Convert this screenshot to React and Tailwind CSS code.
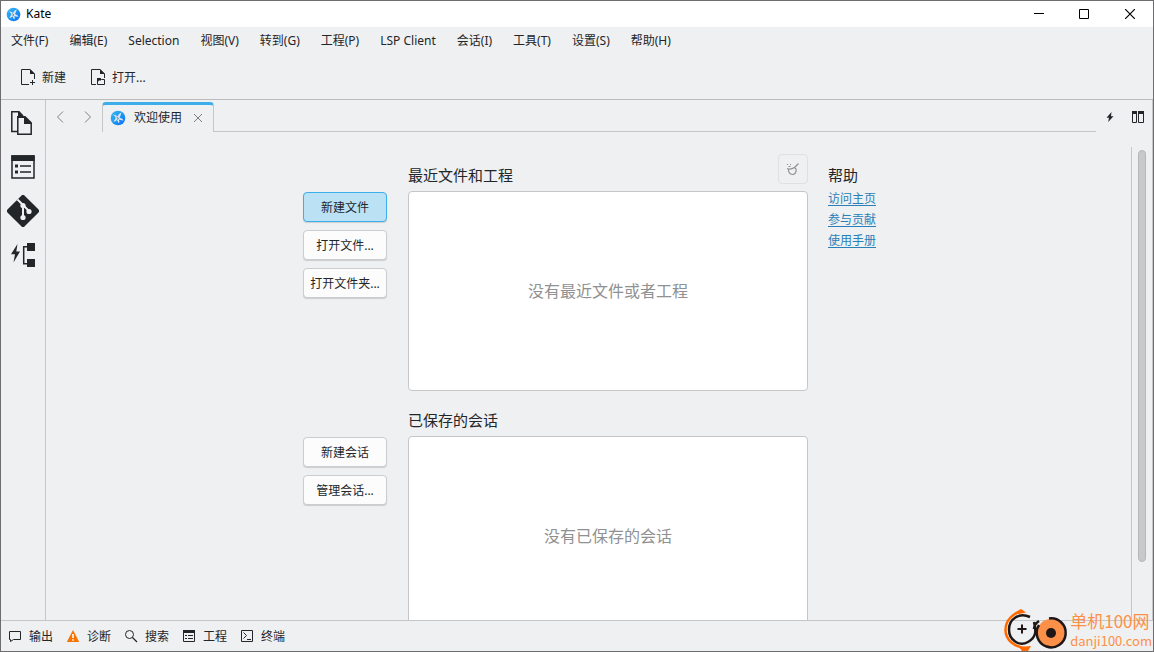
import { useState } from "react";

const MENUS = [
  "文件(F)",
  "编辑(E)",
  "Selection",
  "视图(V)",
  "转到(G)",
  "工程(P)",
  "LSP Client",
  "会话(I)",
  "工具(T)",
  "设置(S)",
  "帮助(H)",
];

const LINKS = ["访问主页", "参与贡献", "使用手册"];

function KateIcon({ size }) {
  return (
    <svg width={size} height={size} viewBox="0 0 16 16">
      <defs>
        <linearGradient id="kate" x1="0" y1="0" x2="1" y2="1">
          <stop offset="0" stopColor="#3fb8f0" />
          <stop offset="0.5" stopColor="#1d99f3" />
          <stop offset="1" stopColor="#0a6cff" />
        </linearGradient>
      </defs>
      <circle cx="8" cy="8" r="7.300" fill="url(#kate)" />
      <path
        d="M3 4.500 6 5.200 7.500 6.500 9 4 11.500 2.500 10.500 5.500 9.500 7.500 12.500 9 13.500 10.500 10.500 10 8.800 9.500 9.500 12 8.500 13 7 10 5 11.500 3.500 11.500 5.500 8.500 5.500 7z"
        fill="#dbe6ee"
      />
      <path d="M6.500 7 8.500 8.500 6.800 9.500" fill="none" stroke="#5d83a3" />
    </svg>
  );
}

function NewIcon() {
  return (
    <svg width="16" height="18" viewBox="0 0 16 18" fill="none" stroke="#232629">
      <path d="M9 16.500H1.500V1.500H10L14.500 6V11" />
      <path d="M10 1v5h5z" fill="#232629" stroke="none" />
      <path d="M12.500 12v5M10 14.500h5" />
    </svg>
  );
}

function OpenIcon() {
  return (
    <svg width="16" height="18" viewBox="0 0 16 18" fill="none" stroke="#232629">
      <path d="M6 16.500H1.500V1.500H10L14.500 6V10" />
      <path d="M10 1v5h5z" fill="#232629" stroke="none" />
      <path d="M7.500 16.500v-6h3l1 1h3v5z" />
      <path d="M7 10h4v2.500H9L7 15z" fill="#232629" stroke="none" />
    </svg>
  );
}

function DocumentsIcon() {
  return (
    <svg width="32" height="32" viewBox="0 0 32 32" fill="none" stroke="#232629" strokeWidth="1.500">
      <path d="M11 24.500H4.800V4.800H12L16 9" />
      <path d="M11 4l7 7h-7z" fill="#232629" stroke="none" />
      <path d="M10.800 9.800H18l6.200 6V27.200H10.800z" />
      <path d="M17 9l8 8h-8z" fill="#232629" stroke="none" />
    </svg>
  );
}

function ProjectListIcon() {
  return (
    <svg width="32" height="32" viewBox="0 0 32 32">
      <path d="M5 5h22v22H5z" fill="none" stroke="#232629" strokeWidth="1.500" />
      <path
        d="M4.300 4.300h23.400v5.700H4.300zM8 13.500h3v3H8zM8 19.500h3v3H8zM13 14.300h11v1.400H13zM13 20.300h11v1.400H13z"
        fill="#232629"
      />
    </svg>
  );
}

function GitIcon() {
  return (
    <svg width="32" height="32" viewBox="0 0 32 32">
      <path
        d="M14.300.700a2.400 2.400 0 0 1 3.400 0L31.300 14.300a2.400 2.400 0 0 1 0 3.400L17.700 31.300a2.400 2.400 0 0 1-3.400 0L.700 17.700a2.400 2.400 0 0 1 0-3.400z"
        fill="#232629"
      />
      <path d="M10.500 4.500 16 10v12M16 10l6 6" fill="none" stroke="#eff0f1" strokeWidth="2" />
      <circle cx="16" cy="10.500" r="2.600" fill="#eff0f1" />
      <circle cx="16" cy="22.500" r="2.600" fill="#eff0f1" />
      <circle cx="22" cy="16.500" r="2.600" fill="#eff0f1" />
    </svg>
  );
}

function LspIcon() {
  return (
    <svg width="32" height="32" viewBox="0 0 32 32" fill="#232629">
      <path d="M10.500 5 4 15.200H8L6.500 23.500 13 12.500H9.300z" />
      <path d="M20 4h8v8h-8zM20 20h8v8h-8z" />
      <path d="M22 7.700h-5.300v17H22" fill="none" stroke="#232629" strokeWidth="1.500" />
    </svg>
  );
}

function OutputIcon() {
  return (
    <svg width="16" height="16" viewBox="0 0 16 16" fill="none" stroke="#232629">
      <path d="M2.500 3.500h11v8h-7l-3 2v-2h-1z" />
    </svg>
  );
}

function WarningIcon() {
  return (
    <svg width="16" height="16" viewBox="0 0 16 16">
      <path d="M8 2 14.200 14H1.800z" fill="#f67400" />
      <path d="M7.200 6h1.600v4H7.200zM7.200 11.200h1.600v1.600H7.200z" fill="#fff" />
    </svg>
  );
}

function SearchIcon() {
  return (
    <svg width="16" height="16" viewBox="0 0 16 16" fill="none" stroke="#232629">
      <circle cx="6.500" cy="6.500" r="4" />
      <path d="M9.500 9.500 14 14" strokeWidth="1.200" />
    </svg>
  );
}

function ProjectIcon() {
  return (
    <svg width="16" height="16" viewBox="0 0 16 16" fill="none" stroke="#232629">
      <path d="M2.500 2.500h11v11h-11z" />
      <path d="M2 2h12v3H2z" fill="#232629" stroke="none" />
      <path d="M4 7.500h2M7 7.500h5M4 10.500h2M7 10.500h5" />
    </svg>
  );
}

function TerminalIcon() {
  return (
    <svg width="16" height="16" viewBox="0 0 16 16" fill="none" stroke="#232629">
      <path d="M2.500 2.500h11v11h-11zM4.500 4.500l3 3-3 3M8 11.500h4" />
    </svg>
  );
}

const SIDE_TOOLS = [
  { label: "文档", Icon: DocumentsIcon },
  { label: "工程列表", Icon: ProjectListIcon },
  { label: "Git", Icon: GitIcon },
  { label: "LSP", Icon: LspIcon },
];

const STATUS_TOOLS = [
  { label: "输出", Icon: OutputIcon },
  { label: "诊断", Icon: WarningIcon },
  { label: "搜索", Icon: SearchIcon },
  { label: "工程", Icon: ProjectIcon },
  { label: "终端", Icon: TerminalIcon },
];

function TitleBar() {
  return (
    <header className="flex h-[26px] shrink-0 items-center bg-white pl-[5px] text-black">
      <KateIcon size={15} />
      <span className="ml-[5px] flex-1">Kate</span>
      <button aria-label="最小化" className="flex h-full w-[46px] items-center justify-center">
        <svg width="11" height="10" viewBox="0 0 11 10" stroke="currentColor">
          <path d="M1 4.500h10" />
        </svg>
      </button>
      <button aria-label="最大化" className="flex h-full w-[46px] items-center justify-center">
        <svg width="10" height="10" viewBox="0 0 10 10" fill="none" stroke="currentColor">
          <path d="M.5.5h9v9h-9z" />
        </svg>
      </button>
      <button aria-label="关闭" className="flex h-full w-[46px] items-center justify-center">
        <svg width="10" height="10" viewBox="0 0 10 10" stroke="currentColor">
          <path d="M0 0l10 10M10 0 0 10" strokeWidth="1.200" />
        </svg>
      </button>
    </header>
  );
}

function TabBar() {
  return (
    <div className="flex h-8 shrink-0">
      <div className="flex w-14 shrink-0 text-[#7d8082]">
        <button aria-label="上一个" className="flex w-7 items-center justify-center pt-px">
          <svg width="8" height="12" viewBox="0 0 8 12" fill="none" stroke="currentColor">
            <path d="M7 .5 1.500 6 7 11.500" />
          </svg>
        </button>
        <button aria-label="下一个" className="flex w-7 items-center justify-center pt-px">
          <svg width="8" height="12" viewBox="0 0 8 12" fill="none" stroke="currentColor">
            <path d="M1 .5 6.500 6 1 11.500" />
          </svg>
        </button>
      </div>
      <div className="mt-[2px] flex w-28 shrink-0 items-center rounded-t-[4px] border-x border-t-[3px] border-x-[#c4c6c8] border-t-[#3daee9] pb-[2px] pl-[7px]">
        <KateIcon size={16} />
        <span className="ml-2">欢迎使用</span>
        <button aria-label="关闭标签" className="ml-[11px] text-[#7d8082]">
          <svg width="10" height="10" viewBox="0 0 10 10" stroke="currentColor">
            <path d="M1 1l8 8M9 1 1 9" />
          </svg>
        </button>
      </div>
      <div className="flex-1 border-b border-[#c4c6c8]" />
      <button aria-label="快速打开" className="flex w-7 items-center justify-center pt-px">
        <svg width="8" height="10" viewBox="0 0 8 10" fill="#232629">
          <path d="M5.500 0 .5 5.700H3L2.200 10 7.500 4.300H5z" />
        </svg>
      </button>
      <button aria-label="拆分视图" className="flex w-7 items-center justify-center pt-px">
        <svg width="12" height="12" viewBox="0 0 12 12" fill="none" stroke="#232629">
          <path d="M.5.5h4v11h-4zM6.500.5h5v11h-5z" />
          <path d="M0 0h5v3H0zM6 0h6v3H6z" fill="#232629" stroke="none" />
        </svg>
      </button>
    </div>
  );
}

function ActionButton({ active, onClick, children }) {
  return (
    <button
      onClick={onClick}
      className={`h-[30px] w-[84px] rounded-[4px] border pt-[2px] text-center shadow-[0_1px_1px_rgba(0,0,0,0.15)] ${
        active ? "border-[#3daee9] bg-[#bbe1f5]" : "border-[#cbcdcf] bg-[#fcfcfc]"
      }`}
    >
      {children}
    </button>
  );
}

function EmptyList({ children }) {
  return (
    <div className="flex h-[200px] items-center justify-center rounded-[4px] border border-[#c4c6c8] bg-white text-base text-[#8f9192]">
      {children}
    </div>
  );
}

function Welcome() {
  const [active, setActive] = useState("新建文件");

  const renderButtons = (labels) =>
    labels.map((label) => (
      <ActionButton key={label} active={active === label} onClick={() => setActive(label)}>
        {label}
      </ActionButton>
    ));

  return (
    <div className="grid min-w-0 flex-1 grid-cols-[85px_400px_46px] content-start justify-center gap-x-5 overflow-hidden pt-[22px]">
      <div className="flex flex-col gap-2 pt-[38px]">
        {renderButtons(["新建文件", "打开文件...", "打开文件夹..."])}
      </div>
      <section>
        <div className="flex h-[37px] items-end justify-between">
          <h2 className="text-[15px] leading-8">最近文件和工程</h2>
          <button
            aria-label="清除列表"
            className="flex size-[30px] items-center justify-center self-start rounded-[4px] border border-[#dfe0e1] text-[#8f9192]"
          >
            <svg width="14" height="14" viewBox="0 0 14 14" fill="none" stroke="currentColor">
              <path
                d="M1 6.500C3 7.500 6 7 9 5.200M2.500 7.200C2 10 4 12.500 6.500 12.500S10.800 10 10 7L8.500 5.500 12.500 1.500"
                strokeWidth="1.200"
              />
              <path d="M1 2.500h1M4 2.500h1M2.500 4.500h2" />
            </svg>
          </button>
        </div>
        <EmptyList>没有最近文件或者工程</EmptyList>
      </section>
      <aside className="whitespace-nowrap pt-[5px]">
        <h2 className="text-[15px] leading-8">帮助</h2>
        <ul className="-mt-[3px]">
          {LINKS.map((link) => (
            <li key={link} className="h-[21px] leading-[21px]">
              <a href="#" className="text-[#2980b9] underline underline-offset-2">
                {link}
              </a>
            </li>
          ))}
        </ul>
      </aside>

      <div className="mt-[13px] flex flex-col gap-2 pt-[33px]">
        {renderButtons(["新建会话", "管理会话..."])}
      </div>
      <section className="mt-[13px]">
        <h2 className="text-[15px] leading-8">已保存的会话</h2>
        <EmptyList>没有已保存的会话</EmptyList>
      </section>
    </div>
  );
}

function Watermark() {
  return (
    <div className="absolute right-px bottom-0 flex items-end gap-[2px] font-['Noto_Sans_CJK_SC',sans-serif] text-[#fd9048]">
      <svg width="64" height="42" viewBox="0 0 64 42" fill="none">
        <path d="M19 2C9 4 1.500 11 1.500 21S10 38 24 40" stroke="#ff6a00" strokeWidth="2.500" />
        <path d="M10 4 17 0l5 3.500L15 5zM15 38l12-1-3 5h-6z" fill="#ff6a00" />
        <path
          d="M26 8C15 3 5 10 5 20.500S15 38 24 33s8-12 6-20M30 20c0-4 2-6 5-8"
          stroke="#1f1716"
          strokeWidth="2.500"
        />
        <path d="M13.500 20h9M18 15.500v9" stroke="#1f1716" strokeWidth="2" />
        <circle cx="47" cy="24" r="14" fill="#fd9048" />
        <path d="M45 9.500A14.500 14.500 0 1 1 35 16" stroke="#1f1716" strokeWidth="2.500" />
        <circle cx="47" cy="24" r="5" fill="#1f1716" />
      </svg>
      <div className="whitespace-nowrap">
        <div className="text-[17px] leading-5">单机100网</div>
        <div className="text-[13px] leading-5">danji100.com</div>
      </div>
    </div>
  );
}

export default function App() {
  return (
    <div className="relative flex h-screen flex-col overflow-hidden border border-[#6d6d6f] bg-[#eff0f1] font-['Noto_Sans','Noto_Sans_CJK_SC',sans-serif] text-xs text-[#232629]">
      <TitleBar />

      <nav className="flex h-7 shrink-0 items-center gap-[21px] pl-[10px] whitespace-nowrap">
        {MENUS.map((menu) => (
          <button key={menu}>{menu}</button>
        ))}
      </nav>

      <div className="flex h-[45px] shrink-0 items-center gap-6 border-b border-[#b9bbbd] pl-[19px]">
        <button className="flex items-center gap-[6px]">
          <NewIcon />
          <span className="pt-[2px]">新建</span>
        </button>
        <button className="flex items-center gap-[6px]">
          <OpenIcon />
          <span className="pt-[2px]">打开...</span>
        </button>
      </div>

      <div className="flex min-h-0 flex-1 border-r border-[#c4c6c8]">
        <aside className="flex w-[45px] shrink-0 flex-col items-center gap-3 border-r border-[#c4c6c8] pt-[7px]">
          {SIDE_TOOLS.map(({ label, Icon }) => (
            <button key={label} aria-label={label}>
              <Icon />
            </button>
          ))}
        </aside>

        <main className="flex min-w-0 flex-1 flex-col">
          <TabBar />
          <div className="flex min-h-0 flex-1">
            <Welcome />
            <div className="mt-[15px] w-[21px] shrink-0 border-l border-[#c4c6c8] px-[6px] pt-[3px]">
              <div className="h-[412px] w-2 rounded-full border border-[#b5b7b8] bg-[#c8cac9]" />
            </div>
          </div>
        </main>
      </div>

      <footer className="flex h-[31px] shrink-0 items-center gap-3 border-t border-[#c4c6c8] pl-[6px]">
        {STATUS_TOOLS.map(({ label, Icon }) => (
          <button key={label} className="flex items-center gap-[6px]">
            <Icon />
            <span className="pt-[2px]">{label}</span>
          </button>
        ))}
      </footer>

      <Watermark />
    </div>
  );
}
